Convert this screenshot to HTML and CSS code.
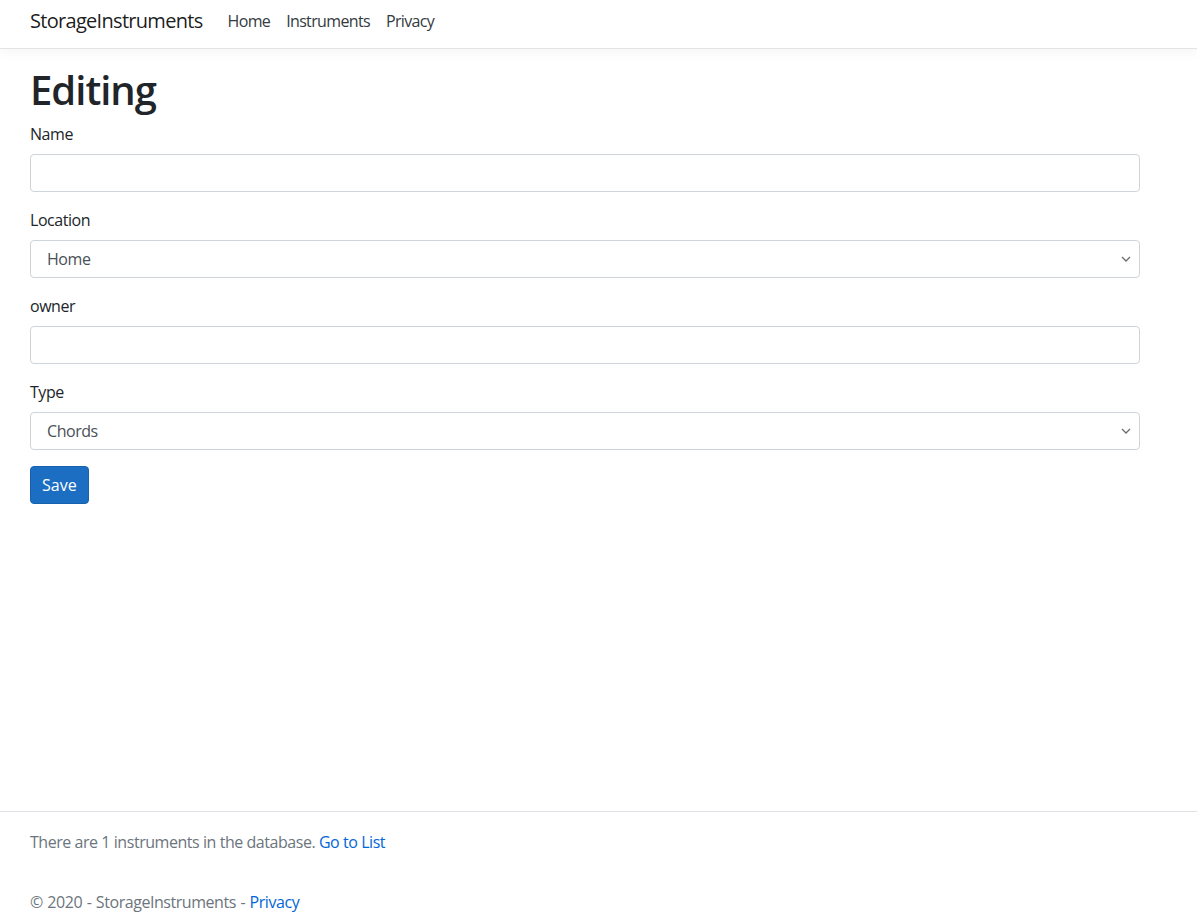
FILE: index.html
```html
<!DOCTYPE html>
<html lang="en">
<head>
<meta charset="utf-8">
<title>Editing - StorageInstruments</title>
<link rel="stylesheet" href="styles.css">
</head>
<body>
<header class="navbar">
  <a class="brand" href="#">StorageInstruments</a>
  <nav class="nav">
    <a class="nav-link" href="#">Home</a>
    <a class="nav-link" href="#">Instruments</a>
    <a class="nav-link" href="#">Privacy</a>
  </nav>
</header>
<main class="main">
  <h1 class="title">Editing</h1>
  <form class="form">
    <div class="form-group">
      <label class="label">Name</label>
      <input class="control" type="text">
    </div>
    <div class="form-group">
      <label class="label">Location</label>
      <div class="select">Home<svg class="chev" width="10" height="6" viewBox="0 0 10 6"><path d="M1 1l4 4 4-4" fill="none" stroke="#6b6b6b" stroke-width="1.3"/></svg></div>
    </div>
    <div class="form-group">
      <label class="label">owner</label>
      <input class="control" type="text">
    </div>
    <div class="form-group">
      <label class="label">Type</label>
      <div class="select">Chords<svg class="chev" width="10" height="6" viewBox="0 0 10 6"><path d="M1 1l4 4 4-4" fill="none" stroke="#6b6b6b" stroke-width="1.3"/></svg></div>
    </div>
    <button class="btn" type="button">Save</button>
  </form>
</main>
<footer class="footer">
  <p class="count">There are 1 instruments in the database. <a href="#" class="link">Go to List</a></p>
  <div class="copy">&copy; 2020 - StorageInstruments - <a href="#" class="link">Privacy</a></div>
</footer>
</body>
</html>
```
FILE: styles.css
```css
* { box-sizing: border-box; }
html, body { margin: 0; padding: 0; }
body {
  font-family: "Open Sans", "Noto Sans", sans-serif;
  font-size: 16px;
  letter-spacing: -0.45px;
  line-height: 24px;
  color: #212529;
  background: #fff;
  min-height: 920px;
  display: flex;
  flex-direction: column;
  overflow: hidden;
}
a { text-decoration: none; }
.navbar {
  display: flex;
  align-items: center;
  height: 49px;
  padding: 0 30px 6px;
  border-bottom: 1px solid #e3e3e3;
  box-shadow: 0 4px 10px rgba(0,0,0,0.04);
}
.brand {
  font-size: 20px;
  letter-spacing: -0.7px;
  color: rgba(0,0,0,0.9);
  margin-right: 17px;
}
.nav { display: flex; }
.nav-link {
  color: #343a40;
  padding: 0 8px;
  letter-spacing: -0.65px;
}
.main {
  flex: 1;
  padding: 17px 30px 0;
}
.title {
  font-size: 40px;
  font-weight: 600;
  letter-spacing: -1px;
  line-height: 48px;
  margin: 0 0 8px;
}
.form { width: 1110px; }
.form-group { margin-bottom: 16px; }
.label { display: block; margin-bottom: 8px; }
.control, .select {
  display: block;
  width: 100%;
  height: 38px;
  border: 1px solid #ced4da;
  border-radius: 4px;
  background: #fff;
  font: inherit;
  color: #495057;
}
.select {
  display: flex;
  align-items: center;
  justify-content: space-between;
  padding: 0 8px 0 16px;
}
.chev { display: block; }
.btn {
  font: inherit;
  color: #fff;
  background: #1b6ec2;
  border: 1px solid #1861ac;
  border-radius: 4px;
  height: 38px;
  padding: 0 11px;
}
.footer {
  border-top: 1px solid #dee2e6;
  padding: 18px 30px 6px;
  color: #6c757d;
}
.count { margin: 0; }
.copy { margin-top: 36px; word-spacing: 0.8px; }
.link { color: #0366d6; }
```
